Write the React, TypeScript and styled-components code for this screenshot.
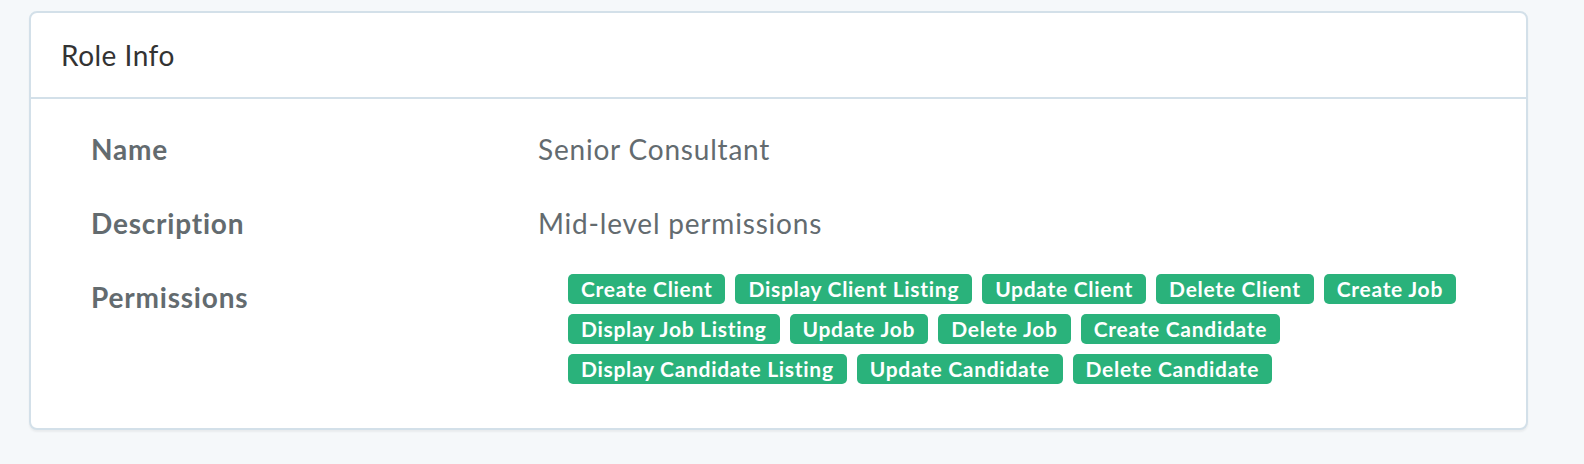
import React from "react";
import styled, { createGlobalStyle } from "styled-components";

const GlobalStyle = createGlobalStyle`
  html, body { margin: 0; padding: 0; }
  body {
    background: #f5f8fa;
    font-family: "Lato", "Open Sans", sans-serif;
    color: #636b6f;
  }
`;

const Page = styled.div`
  padding: 11px 56px 0 29px;
  height: 464px;
  box-sizing: border-box;
`;

const Panel = styled.section`
  background: #fff;
  border: 2px solid #d3e0e9;
  border-radius: 8px;
  box-shadow: 0 2px 2px rgba(0, 0, 0, 0.05);
`;

const PanelHeading = styled.header`
  padding: 20px 30px;
  border-bottom: 2px solid #d3e0e9;
  color: #333;
  font-size: 28px;
  line-height: 44px;
  letter-spacing: 0.5px;
`;

const PanelBody = styled.div`
  padding: 28px 30px 44px 60px;
  display: grid;
  grid-template-columns: 447px 1fr;
  row-gap: 30px;
  font-size: 28px;
  line-height: 44px;
  letter-spacing: 0.8px;
`;

const Label = styled.div`
  font-weight: 700;
  letter-spacing: 0.8px;
`;

const Value = styled.div``;

const Badges = styled.div`
  display: flex;
  flex-wrap: wrap;
  gap: 10px 10px;
  margin-top: -1px;
  padding-left: 30px;
  max-width: 900px;
`;

const Badge = styled.span`
  background: #2ab27b;
  color: #fff;
  font-weight: 700;
  font-size: 21px;
  line-height: 21px;
  letter-spacing: 0.7px;
  padding: 4px 13px 5px;
  border-radius: 5px;
  white-space: nowrap;
`;

const permissions = [
  "Create Client",
  "Display Client Listing",
  "Update Client",
  "Delete Client",
  "Create Job",
  "Display Job Listing",
  "Update Job",
  "Delete Job",
  "Create Candidate",
  "Display Candidate Listing",
  "Update Candidate",
  "Delete Candidate",
];

export default function App() {
  return (
    <>
      <GlobalStyle />
      <Page>
        <Panel>
          <PanelHeading>Role Info</PanelHeading>
          <PanelBody>
            <Label>Name</Label>
            <Value>Senior Consultant</Value>
            <Label>Description</Label>
            <Value>Mid-level permissions</Value>
            <Label>Permissions</Label>
            <Badges>
              {permissions.map((p) => (
                <Badge key={p}>{p}</Badge>
              ))}
            </Badges>
          </PanelBody>
        </Panel>
      </Page>
    </>
  );
}
